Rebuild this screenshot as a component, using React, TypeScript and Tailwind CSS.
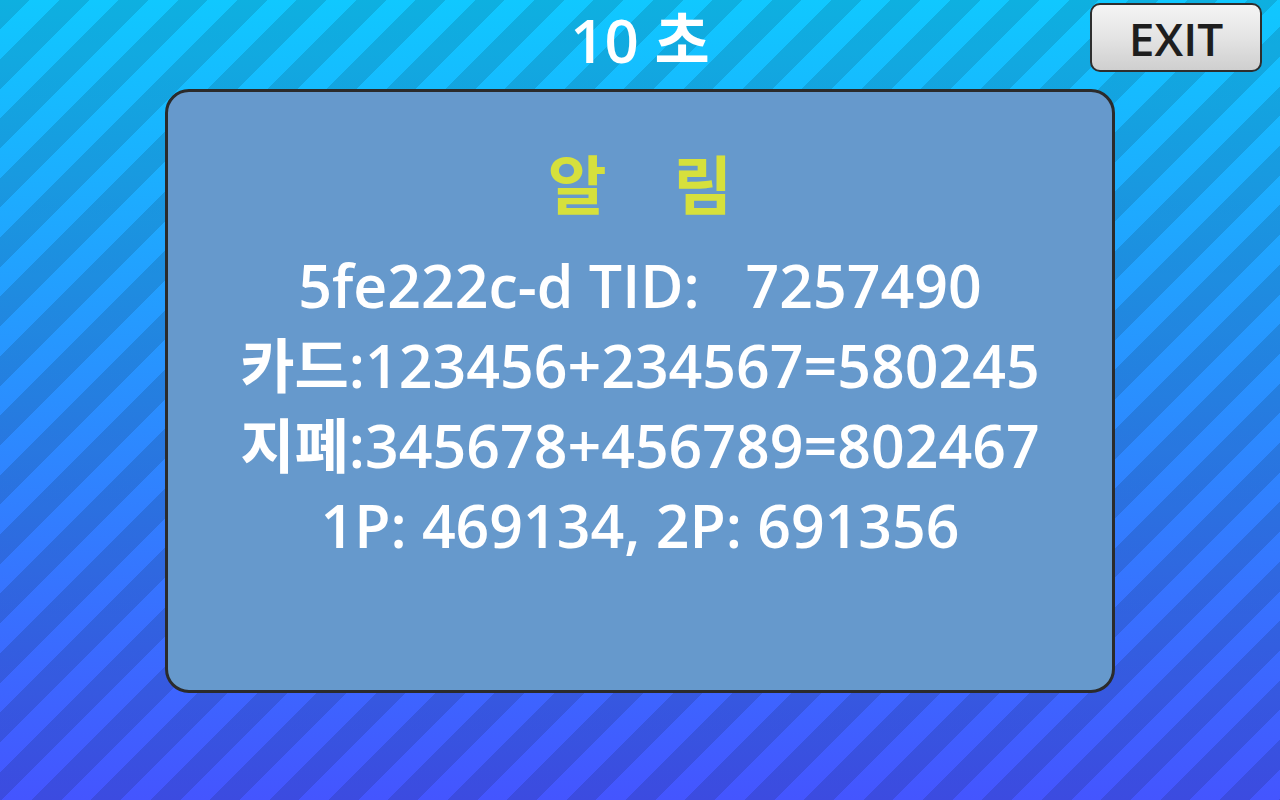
export default function App() {
  const lines = [
    '5fe222c-d TID:   7257490',
    '카드:123456+234567=580245',
    '지폐:345678+456789=802467',
    '1P: 469134, 2P: 691356',
  ];

  return (
    <div
      className="w-full h-[800px] overflow-hidden [background-image:repeating-linear-gradient(135deg,rgba(0,0,0,0.12)_0px,rgba(0,0,0,0.12)_21px,transparent_21px,transparent_42px),linear-gradient(to_bottom,#10c8ff,#4455ff)]"
      style={{ fontFamily: '"Open Sans", "Noto Sans CJK KR", sans-serif' }}
    >
      {/* top bar */}
      <div className="h-[89px] grid grid-cols-[1fr_auto_1fr] items-start">
        <div />
        <div className="pt-[3px] h-[76px] flex items-center text-white text-[60px] font-semibold whitespace-pre">10 초</div>
        <div className="flex justify-end pr-[18px] pt-[3px]">
          <button className="w-[172px] h-[69px] rounded-[10px] border-2 border-[#2e2e2e] bg-gradient-to-b from-[#f4f4f4] via-[#e4e4e4] to-[#cfcfcf] text-[#1e1e1e] text-[46px] font-semibold leading-none flex items-center justify-center">
            EXIT
          </button>
        </div>
      </div>

      {/* notice panel */}
      <div className="mx-auto w-[950px] h-[604px] rounded-[24px] border-[3px] border-[#2b2b2b] bg-[#6699cc] pt-[53px] flex flex-col items-center">
        <div className="h-[80px] leading-[80px] text-[64px] font-bold text-[#d6e03c] whitespace-pre">알    림</div>
        <div className="mt-5 flex flex-col items-center text-white text-[59px] font-semibold">
          {lines.map((l) => (
            <div key={l} className="h-[80px] leading-[80px] whitespace-pre">{l}</div>
          ))}
        </div>
      </div>
    </div>
  );
}
